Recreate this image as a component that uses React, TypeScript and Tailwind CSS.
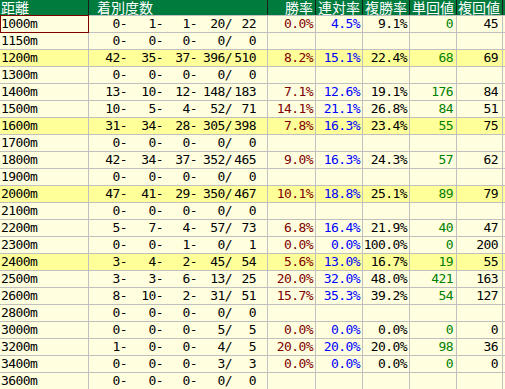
import React from 'react';

type Row = {
  dist: string;
  rec: [string, string, string, string, string];
  win?: string;
  ren?: string;
  fuku?: string;
  tan?: string;
  fukukai?: string;
  hl?: boolean;
};

const rows: Row[] = [
  { dist: '1000m', rec: ['0-', '1-', '1-', '20/', '22'], win: '0.0%', ren: '4.5%', fuku: '9.1%', tan: '0', fukukai: '45' },
  { dist: '1150m', rec: ['0-', '0-', '0-', '0/', '0'] },
  { dist: '1200m', rec: ['42-', '35-', '37-', '396/', '510'], win: '8.2%', ren: '15.1%', fuku: '22.4%', tan: '68', fukukai: '69', hl: true },
  { dist: '1300m', rec: ['0-', '0-', '0-', '0/', '0'] },
  { dist: '1400m', rec: ['13-', '10-', '12-', '148/', '183'], win: '7.1%', ren: '12.6%', fuku: '19.1%', tan: '176', fukukai: '84' },
  { dist: '1500m', rec: ['10-', '5-', '4-', '52/', '71'], win: '14.1%', ren: '21.1%', fuku: '26.8%', tan: '84', fukukai: '51' },
  { dist: '1600m', rec: ['31-', '34-', '28-', '305/', '398'], win: '7.8%', ren: '16.3%', fuku: '23.4%', tan: '55', fukukai: '75', hl: true },
  { dist: '1700m', rec: ['0-', '0-', '0-', '0/', '0'] },
  { dist: '1800m', rec: ['42-', '34-', '37-', '352/', '465'], win: '9.0%', ren: '16.3%', fuku: '24.3%', tan: '57', fukukai: '62' },
  { dist: '1900m', rec: ['0-', '0-', '0-', '0/', '0'] },
  { dist: '2000m', rec: ['47-', '41-', '29-', '350/', '467'], win: '10.1%', ren: '18.8%', fuku: '25.1%', tan: '89', fukukai: '79', hl: true },
  { dist: '2100m', rec: ['0-', '0-', '0-', '0/', '0'] },
  { dist: '2200m', rec: ['5-', '7-', '4-', '57/', '73'], win: '6.8%', ren: '16.4%', fuku: '21.9%', tan: '40', fukukai: '47' },
  { dist: '2300m', rec: ['0-', '0-', '1-', '0/', '1'], win: '0.0%', ren: '0.0%', fuku: '100.0%', tan: '0', fukukai: '200' },
  { dist: '2400m', rec: ['3-', '4-', '2-', '45/', '54'], win: '5.6%', ren: '13.0%', fuku: '16.7%', tan: '19', fukukai: '55', hl: true },
  { dist: '2500m', rec: ['3-', '3-', '6-', '13/', '25'], win: '20.0%', ren: '32.0%', fuku: '48.0%', tan: '421', fukukai: '163' },
  { dist: '2600m', rec: ['8-', '10-', '2-', '31/', '51'], win: '15.7%', ren: '35.3%', fuku: '39.2%', tan: '54', fukukai: '127' },
  { dist: '2800m', rec: ['0-', '0-', '0-', '0/', '0'] },
  { dist: '3000m', rec: ['0-', '0-', '0-', '5/', '5'], win: '0.0%', ren: '0.0%', fuku: '0.0%', tan: '0', fukukai: '0' },
  { dist: '3200m', rec: ['1-', '0-', '0-', '4/', '5'], win: '20.0%', ren: '20.0%', fuku: '20.0%', tan: '98', fukukai: '36' },
  { dist: '3400m', rec: ['0-', '0-', '0-', '3/', '3'], win: '0.0%', ren: '0.0%', fuku: '0.0%', tan: '0', fukukai: '0' },
  { dist: '3600m', rec: ['0-', '0-', '0-', '0/', '0'] },
];

const cols = 'grid grid-cols-[88px_178px_47px_46px_46px_46px_45px_1fr] gap-x-px';
const recWidths = ['w-[38px]', 'w-[36px]', 'w-[34px]', 'w-[35px]', 'w-[24px]'];

export default function App() {
  return (
    <div className="w-[505px] h-[389px] bg-[#c0c0c0] font-['DejaVu_Sans_Mono','Noto_Sans_CJK_JP',monospace] text-[13px] tracking-[-0.6px] leading-[16px] text-black">
      {/* header */}
      <div className={`${cols} h-[15px] bg-[#1c1c1c] font-['Noto_Sans_CJK_JP',sans-serif] text-[14px] tracking-normal leading-[15px] text-white`}>
        <div className="bg-[#007b3e] pl-px">距離</div>
        <div className="bg-[#007b3e] pl-2">着別度数</div>
        <div className="bg-[#007b3e] text-right pr-[2px]">勝率</div>
        <div className="bg-[#007b3e] text-right pr-[2px]">連対率</div>
        <div className="bg-[#007b3e] text-right pr-[2px]">複勝率</div>
        <div className="bg-[#007b3e] text-right pr-[2px]">単回値</div>
        <div className="bg-[#007b3e] text-right pr-[2px]">複回値</div>
        <div className="bg-[#007b3e]" />
      </div>

      {/* body */}
      <div className="flex flex-col gap-y-px pt-px">
        {rows.map((r, i) => {
          const bg = r.hl ? 'bg-[#ffff99]' : 'bg-[#ffffe0]';
          return (
            <div key={r.dist} className={`${cols} h-[16px]`}>
              <div className={`${bg} relative pl-px`}>
                {r.dist}
                {i === 0 && (
                  <span className="absolute -top-px -bottom-px left-0 -right-px border border-[#800000]" />
                )}
              </div>
              <div className={`${bg} flex`}>
                {r.rec.map((v, j) => (
                  <span key={j} className={`${recWidths[j]} flex justify-end whitespace-pre`}>
                    {v}
                  </span>
                ))}
              </div>
              <div className={`${bg} text-right pr-[2px] text-[#800000]`}>{r.win}</div>
              <div className={`${bg} text-right pr-[2px] text-[#0000ff]`}>{r.ren}</div>
              <div className={`${bg} text-right pr-[2px]`}>{r.fuku}</div>
              <div className={`${bg} text-right pr-[3px] text-[#008000]`}>{r.tan}</div>
              <div className={`${bg} text-right pr-[4px]`}>{r.fukukai}</div>
              <div className={bg} />
            </div>
          );
        })}
      </div>
    </div>
  );
}
